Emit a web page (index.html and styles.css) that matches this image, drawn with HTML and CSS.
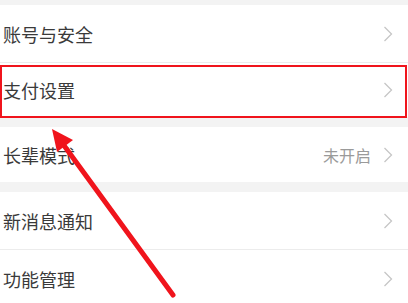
FILE: index.html
```html
<!DOCTYPE html>
<html lang="zh-CN">
<head>
    <meta charset="UTF-8">
    <meta name="viewport" content="width=device-width, initial-scale=1.0">
    <title>设置</title>
    <link rel="stylesheet" href="styles.css">
</head>
<body>
    <div class="page">
        <div class="band band-top"></div>

        <div class="group">
            <div class="row row-tall">
                <span class="label">账号与安全</span>
                <svg class="chevron" viewBox="0 0 10 16"><path d="M1.5 1 L8.5 8 L1.5 15"/></svg>
            </div>
            <div class="row row-short">
                <span class="label">支付设置</span>
                <svg class="chevron" viewBox="0 0 10 16"><path d="M1.5 1 L8.5 8 L1.5 15"/></svg>
            </div>
        </div>

        <div class="band"></div>

        <div class="group">
            <div class="row row-mid">
                <span class="label">长辈模式</span>
                <span class="value">未开启</span>
                <svg class="chevron" viewBox="0 0 10 16"><path d="M1.5 1 L8.5 8 L1.5 15"/></svg>
            </div>
        </div>

        <div class="band"></div>

        <div class="group">
            <div class="row row-tall">
                <span class="label">新消息通知</span>
                <svg class="chevron" viewBox="0 0 10 16"><path d="M1.5 1 L8.5 8 L1.5 15"/></svg>
            </div>
            <div class="row row-tall">
                <span class="label">功能管理</span>
                <svg class="chevron" viewBox="0 0 10 16"><path d="M1.5 1 L8.5 8 L1.5 15"/></svg>
            </div>
        </div>

        <!-- annotation: highlight box + arrow -->
        <div class="highlight"></div>
        <svg class="arrow" viewBox="0 0 408 303">
            <line x1="173" y1="295" x2="60" y2="140" />
            <polygon points="52,129 73,140 57,152" />
        </svg>
    </div>
</body>
</html>
```

FILE: styles.css
```css
:root {
    --bg: #f3f3f3;
    --text: #3a3a3a;
    --muted: #9a9a9a;
    --line: #ececec;
    --chevron: #c6c6c6;
    --red: #f0141c;
}

* {
    margin: 0;
    padding: 0;
    box-sizing: border-box;
}

body {
    background: var(--bg);
    font-family: "Noto Sans CJK SC", "Noto Sans", sans-serif;
    color: var(--text);
    overflow: hidden;
}

.page {
    position: relative;
    width: 408px;
    height: 303px;
    overflow: hidden;
}

.band {
    height: 10px;
}

.band-top {
    height: 5px;
}

.group {
    background: white;
}

.row {
    display: flex;
    align-items: center;
    padding: 0 15px 0 3px;
    border-bottom: 1px solid var(--line);
}

.row:last-child {
    border-bottom: none;
}

.row-tall {
    height: 58px;
}

.row-short {
    height: 54px;
}

.row-mid {
    height: 55px;
}

.label {
    flex-grow: 1;
    font-size: 18px;
    line-height: 1;
}

.value {
    font-size: 16px;
    color: var(--muted);
    margin-right: 12px;
}

.chevron {
    width: 10px;
    height: 16px;
    fill: none;
    stroke: var(--chevron);
    stroke-width: 1.3;
}

.highlight {
    position: absolute;
    left: 0;
    top: 65px;
    width: 407px;
    height: 53px;
    border: 2px solid var(--red);
}

.arrow {
    position: absolute;
    left: 0;
    top: 0;
    width: 408px;
    height: 303px;
}

.arrow line {
    stroke: var(--red);
    stroke-width: 5;
    stroke-linecap: round;
}

.arrow polygon {
    fill: var(--red);
}
```
